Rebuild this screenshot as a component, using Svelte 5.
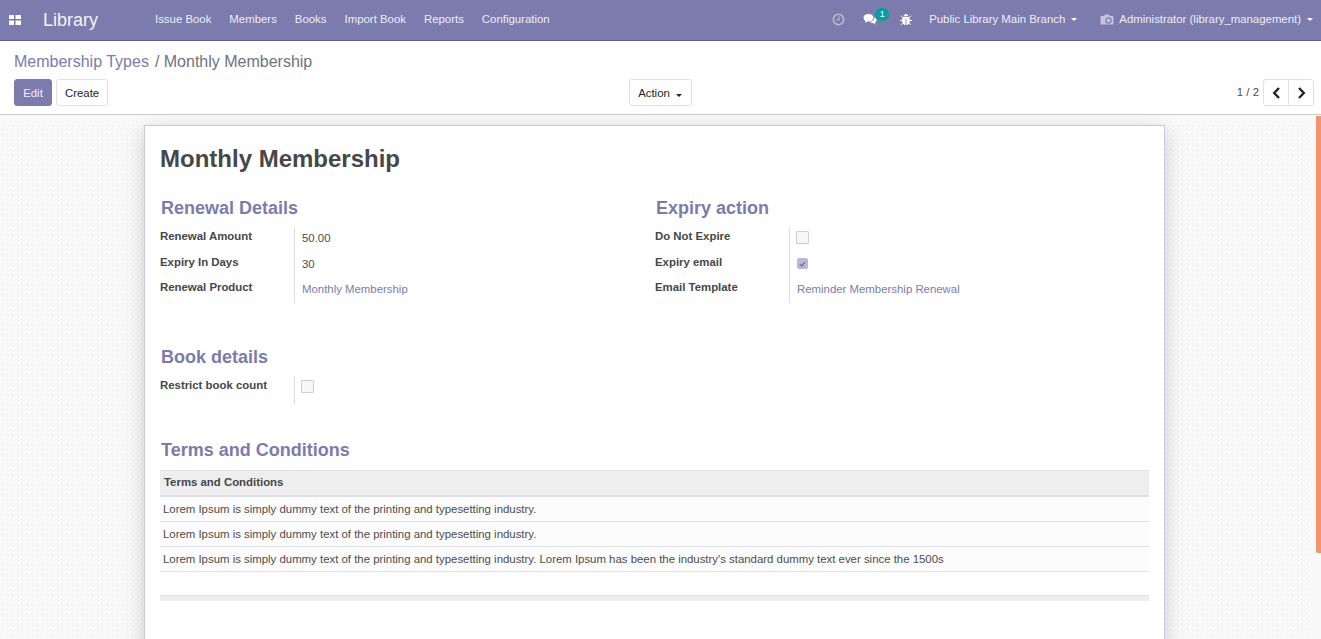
<script>
  const menus = ['Issue Book', 'Members', 'Books', 'Import Book', 'Reports', 'Configuration'];
  const short = 'Lorem Ipsum is simply dummy text of the printing and typesetting industry.';
  const terms = [short, short, short + " Lorem Ipsum has been the industry's standard dummy text ever since the 1500s"];
</script>

<div class="shell">
  <header class="nav">
    <svg class="apps" width="12" height="10" viewBox="0 0 12 10" aria-hidden="true">
      <path d="M0 0h5v4H0zM6.5 0H12v4H6.5zM0 5.500h5V10H0zM6.500 5.500H12V10H6.500z" fill="#fff" />
    </svg>
    <span class="brand">Library</span>
    <nav class="menu">
      {#each menus as m}<span>{m}</span>{/each}
    </nav>
    <div class="systray">
      <svg class="clock" width="13" height="13" viewBox="0 0 13 13" aria-hidden="true">
        <circle cx="6.500" cy="6.500" r="5.200" fill="none" stroke="#b9b8d2" stroke-width="1.600" />
        <path d="M7 3.200v3.800H4" fill="none" stroke="#b9b8d2" stroke-width="1.200" />
      </svg>
      <span class="chat">
        <svg width="14" height="13" viewBox="0 0 14 13" aria-hidden="true">
          <path d="M5.500 1C2.500 1 .5 2.700.5 4.800c0 1.300.8 2.400 2 3.100L2 10l2.400-1.500h1.100c3 0 5-1.600 5-3.700S8.500 1 5.500 1z" fill="#fff" />
          <path d="M11.400 4.200c1.300.6 2.100 1.600 2.100 2.800 0 1-.6 1.900-1.500 2.500l.5 2-2.300-1.500c-1.300 0-2.500-.4-3.300-1 2.500-.3 4.500-2 4.500-4.800z" fill="#fff" />
        </svg>
        <b class="badge">1</b>
      </span>
      <svg class="bug" width="12" height="13" viewBox="0 0 12 13" aria-hidden="true">
        <path d="M3.800 3.200C4 1.800 4.900 1 6 1s2 .8 2.200 2.200zM3 4h6c.7 1 .9 2.200.9 3.500 0 2.500-1.500 4.500-3.500 4.500V5.500h-.8V12c-2 0-3.500-2-3.500-4.500C2.100 6.200 2.300 5 3 4z" fill="#fff" />
        <path d="M2.800 4.300.8 2.800M9.200 4.300l2-1.500M2 7.500H0M10 7.500h2M2.700 10.200l-1.700 1.600M9.300 10.200l1.700 1.600" stroke="#fff" stroke-width="1" />
      </svg>
      <span class="drop branch">Public Library Main Branch<i class="caret"></i></span>
      <span class="drop user">
        <svg width="14" height="11" viewBox="0 0 14 11" aria-hidden="true">
          <path d="M1.500 2H4l1-1.500h4L10 2h2.500c.6 0 1 .4 1 1v6.500c0 .6-.4 1-1 1h-11c-.6 0-1-.4-1-1V3c0-.6.4-1 1-1z" fill="#c4c3da" />
          <circle cx="8.500" cy="6.500" r="2.600" fill="none" stroke="#7c7bad" stroke-width="1.200" />
        </svg>
        Administrator (library_management)<i class="caret"></i>
      </span>
    </div>
  </header>

  <section class="panel">
    <div class="crumbs"><a href="#types">Membership Types</a><span>/ Monthly Membership</span></div>
    <div class="actions">
      <div class="left">
        <button class="primary">Edit</button>
        <button>Create</button>
      </div>
      <div class="center">
        <button class="action">Action<i class="caret dark"></i></button>
      </div>
      <div class="pager">
        <span>1 / 2</span>
        <div class="pager-btns">
          <button aria-label="Previous">
            <svg width="9" height="12" viewBox="0 0 9 12"><path d="M7 1 2.200 6 7 11" fill="none" stroke="#212529" stroke-width="2.400" /></svg>
          </button>
          <button aria-label="Next">
            <svg width="9" height="12" viewBox="0 0 9 12"><path d="M2 1l4.800 5L2 11" fill="none" stroke="#212529" stroke-width="2.400" /></svg>
          </button>
        </div>
      </div>
    </div>
  </section>

  <main class="content">
    <div class="track"><div class="thumb"></div></div>
    <div class="sheet-bg">
      <article class="sheet">
        <h1>Monthly Membership</h1>

        <div class="groups">
          <div class="group">
            <h2>Renewal Details</h2>
            <div class="fields">
              <div class="row r1"><label>Renewal Amount</label><div class="val">50.00</div></div>
              <div class="row r2"><label>Expiry In Days</label><div class="val">30</div></div>
              <div class="row r3"><label>Renewal Product</label><div class="val link">Monthly Membership</div></div>
            </div>
          </div>
          <div class="group">
            <h2>Expiry action</h2>
            <div class="fields">
              <div class="row r1"><label>Do Not Expire</label><div class="val"><span class="check"></span></div></div>
              <div class="row r2"><label>Expiry email</label><div class="val">
                <span class="check on">
                  <svg width="7" height="6" viewBox="0 0 7 6"><path d="M.8 3l2 2L6.200 1" fill="none" stroke="#75749f" stroke-width="1.300" /></svg>
                </span>
              </div></div>
              <div class="row r3"><label>Email Template</label><div class="val link">Reminder Membership Renewal</div></div>
            </div>
          </div>
        </div>

        <h2 class="book-title">Book details</h2>
        <div class="fields single">
          <div class="row r4"><label>Restrict book count</label><div class="val"><span class="check"></span></div></div>
        </div>

        <h2 class="terms-title">Terms and Conditions</h2>
        <table>
          <thead><tr><th>Terms and Conditions</th></tr></thead>
          <tbody>
            {#each terms as t}<tr><td>{t}</td></tr>{/each}
          </tbody>
          <tfoot><tr><td></td></tr></tfoot>
        </table>
      </article>
    </div>
  </main>
</div>

<style>
  :global(body) {
    margin: 0;
    overflow: hidden;
  }
  .shell {
    width: 1321px;
    height: 639px;
    display: flex;
    flex-direction: column;
    overflow: hidden;
    font: 11.700px/1.500 "Liberation Sans", Arial, sans-serif;
    color: #4c4c4c;
    background: #fff;
  }
  .nav {
    flex: none;
    height: 40px;
    display: flex;
    align-items: center;
    background: #7c7bad;
    border-bottom: 1px solid #5f5e97;
    color: #fff;
  }
  .apps {
    margin-left: 9px;
  }
  .brand {
    margin-left: 22px;
    font-size: 18px;
    line-height: 40px;
    width: 112px;
    color: #f4f4f8;
  }
  .menu {
    display: flex;
    gap: 18px;
    font-size: 11.400px;
    color: #eeeef6;
  }
  .systray {
    margin-left: auto;
    display: flex;
    align-items: center;
    font-size: 11.400px;
    color: #eeeef6;
  }
  .clock {
    display: block;
  }
  .chat {
    position: relative;
    margin-left: 18px;
    display: flex;
  }
  .badge {
    position: absolute;
    left: 12px;
    top: -5px;
    width: 14px;
    height: 13px;
    border-radius: 7px;
    background: #00a09d;
    color: #fff;
    font-size: 9px;
    font-weight: normal;
    line-height: 13px;
    text-align: center;
  }
  .bug {
    margin-left: 23px;
  }
  .drop {
    display: flex;
    align-items: center;
    white-space: nowrap;
  }
  .branch {
    margin-left: 17px;
  }
  .user {
    margin-left: 23px;
    margin-right: 8px;
  }
  .user svg {
    margin-right: 5px;
  }
  .caret {
    display: inline-block;
    margin-left: 6px;
    border-top: 3.500px solid #fff;
    border-left: 3.500px solid transparent;
    border-right: 3.500px solid transparent;
  }
  .caret.dark {
    border-top-color: #212529;
  }
  .panel {
    flex: none;
    height: 74px;
    box-sizing: border-box;
    padding: 0 14px 0 14px;
    border-bottom: 1px solid #ccc;
  }
  .crumbs {
    display: flex;
    gap: 6px;
    height: 38px;
    padding-top: 10px;
    box-sizing: border-box;
    font-size: 16px;
    line-height: 22px;
    color: #6c757d;
  }
  .crumbs a {
    color: #7c7bad;
    text-decoration: none;
  }
  .actions {
    display: grid;
    grid-template-columns: 1fr auto 1fr;
    align-items: center;
    height: 27px;
  }
  .left {
    display: flex;
    gap: 4px;
  }
  .center {
    display: flex;
  }
  .action {
    margin-left: -1px;
    width: 63px;
  }
  button {
    height: 27px;
    box-sizing: border-box;
    padding: 0 8px;
    border: 1px solid #dee2e6;
    border-radius: 3px;
    background: #fff;
    color: #212529;
    font: 11.400px "Liberation Sans", Arial, sans-serif;
  }
  button.primary {
    width: 38px;
    background: #7c7bad;
    border-color: #7c7bad;
    color: #f0f0f6;
  }
  .pager {
    display: flex;
    justify-content: flex-end;
    align-items: center;
    gap: 4px;
    margin-right: -7px;
    font-size: 11.400px;
  }
  .pager-btns {
    display: flex;
  }
  .pager-btns button {
    width: 26px;
    padding: 0;
    display: flex;
    align-items: center;
    justify-content: center;
  }
  .pager-btns button:first-child {
    border-radius: 3px 0 0 3px;
  }
  .pager-btns button:last-child {
    margin-left: -1px;
    border-radius: 0 3px 3px 0;
  }
  .content {
    flex: 1;
    min-height: 0;
    position: relative;
    background: #f9f9f9;
    padding: 10px 13px 0 0;
  }
  .track {
    position: absolute;
    top: 0;
    right: 0;
    bottom: 0;
    width: 5px;
  }
  .thumb {
    margin-top: 1px;
    height: 437px;
    background: #f5946b;
    border-radius: 0 0 0 2px;
  }
  .sheet-bg {
    height: 100%;
    background-color: #fafafa;
    background-image: repeating-conic-gradient(#f5f5f5 0 25%, #fbfbfb 0 50%);
    background-size: 5px 5px;
  }
  .sheet {
    box-sizing: border-box;
    width: 1021px;
    height: 540px;
    margin-left: 144px;
    padding: 15px 15px 0 15px;
    background: #fff;
    border: 1px solid #c9c8de;
    box-shadow: 0 5px 20px -1px rgba(0, 0, 0, 0.2);
  }
  h1 {
    margin: 0;
    font-size: 24px;
    line-height: 36px;
    font-weight: bold;
    color: #454748;
  }
  h2 {
    margin: 0;
    font-size: 18px;
    line-height: 22px;
    font-weight: bold;
    color: #7c7bad;
    padding-left: 1px;
  }
  .groups {
    display: grid;
    grid-template-columns: 495px 1fr;
    margin-top: 20px;
  }
  .fields {
    margin-top: 8px;
  }
  .row {
    display: grid;
    grid-template-columns: 134px 1fr;
  }
  .row label {
    font-weight: bold;
    font-size: 11.400px;
    color: #454748;
    line-height: 18px;
    padding-top: 0;
  }
  .val {
    border-left: 1px solid #ddd;
    padding-left: 7px;
    font-size: 11.400px;
    line-height: 18px;
    color: #4c4c4c;
  }
  .r1 {
    height: 26px;
  }
  .r2 {
    height: 25px;
  }
  .r3 {
    height: 25px;
  }
  .r4 {
    height: 29px;
  }
  .val {
    padding-top: 2px;
  }
  .link {
    color: #7c7bad;
  }
  .check {
    display: block;
    box-sizing: border-box;
    width: 13px;
    height: 13px;
    margin: 2px 0 0 -1px;
    border: 1px solid #cfcfcf;
    background: #f7f7f7;
    border-radius: 1px;
  }
  .check.on {
    margin: 3px 0 0 0;
    width: 11px;
    height: 11px;
    border: 0;
    border-radius: 2px;
    background: #b9b8d6;
    display: flex;
    align-items: center;
    justify-content: center;
  }
  .book-title {
    margin-top: 43px;
  }
  .fields.single {
    margin-top: 8px;
  }
  .terms-title {
    margin-top: 34px;
  }
  table {
    width: 989px;
    margin-top: 9px;
    border-collapse: collapse;
    font-size: 11.400px;
  }
  th {
    height: 24px;
    padding: 0 4px;
    text-align: left;
    background: #eee;
    color: #454748;
    border-top: 1px solid #e2e2e2;
    border-bottom: 2px solid #dee2e6;
  }
  td {
    padding: 0 3px;
    height: 24px;
    line-height: 18px;
    color: #4c4c4c;
    border-bottom: 1px solid #dee2e6;
    background: #fcfcfc;
  }
  tfoot td {
    height: 5px;
    padding: 0;
    background: #eee;
    border-top: 1px solid #dee2e6;
    border-bottom: 0;
  }
  tbody tr:last-child td {
    border-bottom: 1px solid #dee2e6;
  }
  tfoot::before {
    content: "";
    display: table-row;
    height: 24px;
  }
</style>
